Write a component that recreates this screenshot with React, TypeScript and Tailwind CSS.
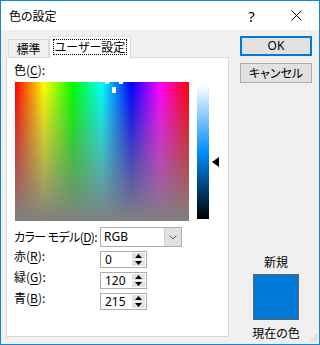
const FONT = "[font-family:'Noto_Sans_CJK_JP',sans-serif] [font-feature-settings:'palt']";

function Spinner({ label, mnemonic, value }: { label: string; mnemonic: string; value: string }) {
  return (
    <div className="flex items-start">
      <div className="w-[86px] -mt-[3px] whitespace-nowrap">
        {label}(<u className="underline-offset-2">{mnemonic}</u>):
      </div>
      <div className="w-[47px] h-[17px] border border-[#adadad] bg-white flex">
        <div className="flex-1 pl-[4px] leading-[15px] [font-family:'Noto_Sans',sans-serif] text-[12px]">{value}</div>
        <div className="w-[15px] flex flex-col p-[1px] gap-[1px]">
          <div className="flex-1 bg-[#e1e1e1] flex items-center justify-center">
            <svg width="7" height="4" viewBox="0 0 7 4">
              <path d="M0 4 L3.5 0 L7 4 Z" fill="#000" />
            </svg>
          </div>
          <div className="flex-1 bg-[#e1e1e1] flex items-center justify-center">
            <svg width="7" height="4" viewBox="0 0 7 4">
              <path d="M0 0 L3.5 4 L7 0 Z" fill="#000" />
            </svg>
          </div>
        </div>
      </div>
    </div>
  );
}

export default function App() {
  return (
    <div className={`w-[320px] h-[345px] border border-[#1883d7] bg-[#f0f0f0] flex flex-col overflow-hidden relative text-black text-[12px] leading-[16px] ${FONT}`}>
      {/* title bar */}
      <div className="h-[29px] bg-white flex items-center shrink-0">
        <div className="pl-[8px] flex-1">色の設定</div>
        <div className="w-[46px] h-full flex items-center justify-center text-[15px] [font-family:'Noto_Sans',sans-serif] pl-[3px]">?</div>
        <div className="w-[46px] h-full flex items-center justify-center">
          <svg width="11" height="11" viewBox="0 0 11 11">
            <path d="M0.5 0.5 L10.5 10.5 M10.5 0.5 L0.5 10.5" stroke="#000" strokeWidth="1" />
          </svg>
        </div>
      </div>

      {/* body */}
      <div className="flex-1 flex pl-[5px]">
        <div className="w-[223px] flex flex-col pb-[7px]">
          <div className="h-[27px] flex items-end pl-[2px] shrink-0">
            <div className="w-[41px] h-[18px] border border-b-0 border-[#d9d9d9] flex items-center justify-center">
              標準
            </div>
            <div className="w-[82px] h-[22px] mb-[-1px] relative z-10 bg-white border border-b-0 border-[#d9d9d9] flex items-center justify-center pb-[1px]">
              <span className="border border-dotted border-black px-[1px] leading-[14px]">ユーザー設定</span>
            </div>
          </div>

          <div className="flex-1 border border-[#d9d9d9] bg-white pl-[7px] pt-[4px] flex flex-col">
            <div>
              色(<u className="underline-offset-2">C</u>):
            </div>
            <div className="flex items-start mt-[4px] ml-[1px]">
              <div className="w-[174px] h-[139px] relative [background-image:linear-gradient(to_bottom,rgba(128,128,128,0),#808080),linear-gradient(to_right,#f00,#ff0,#0f0,#0ff,#00f,#f0f,#f00)]">
                <div className="absolute left-[90px] top-0 w-[4px] h-[2px] bg-white" />
                <div className="absolute left-[104px] top-0 w-[4px] h-[2px] bg-white" />
                <div className="absolute left-[97px] top-[5px] w-[4px] h-[6px] bg-white" />
              </div>
              <div className="ml-[8px] mt-[3px] w-[12px] h-[134px] [background-image:linear-gradient(to_bottom,#fff,#008cff_50%,#000)]" />
              <svg className="ml-[3px] mt-[75px]" width="7" height="10" viewBox="0 0 7 10">
                <path d="M0 5 L7 0 L7 10 Z" fill="#000" />
              </svg>
            </div>

            <div className="flex items-center mt-[6px]">
              <div className="w-[86px] whitespace-nowrap tracking-[-0.6px]">
                カラー モデル(<u className="underline-offset-2">D</u>):
              </div>
              <div className="w-[82px] h-[20px] border border-[#adadad] bg-white flex">
                <div className="flex-1 pl-[3px] leading-[18px] [font-family:'Noto_Sans',sans-serif] text-[12px]">RGB</div>
                <div className="w-[17px] bg-[#e1e1e1] border-l border-[#d0d0d0] flex items-center justify-center">
                  <svg width="8" height="5" viewBox="0 0 8 5">
                    <path d="M0.5 0.5 L4 4 L7.5 0.5" stroke="#606060" strokeWidth="1" fill="none" />
                  </svg>
                </div>
              </div>
            </div>

            <div className="flex flex-col gap-[4px] mt-[4px]">
              <Spinner label="赤" mnemonic="R" value="0" />
              <Spinner label="緑" mnemonic="G" value="120" />
              <Spinner label="青" mnemonic="B" value="215" />
            </div>
          </div>
        </div>

        <div className="w-[72px] ml-[11px] flex flex-col pt-[6px] pb-[3px]">
          <div className="h-[20px] border-2 border-[#0078d7] bg-[#e1e1e1] flex items-center justify-center [font-family:'Noto_Sans',sans-serif]">
            OK
          </div>
          <div className="h-[20px] mt-[7px] border border-[#adadad] bg-[#e1e1e1] flex items-center justify-center">
            キャンセル
          </div>
          <div className="mt-auto flex flex-col items-center">
            <div>新規</div>
            <div className="mt-[4px] w-[46px] h-[46px] bg-[#0078d7] border border-[#646464]" />
            <div className="mt-[5px]">現在の色</div>
          </div>
        </div>
      </div>

      <svg className="absolute right-[1px] bottom-[1px]" width="9" height="9" viewBox="0 0 9 9">
        <path d="M8 1 L1 8 M8 4 L4 8 M8 7 L7 8" stroke="#a0a0a0" strokeWidth="1" strokeDasharray="1 1" />
      </svg>
    </div>
  );
}
